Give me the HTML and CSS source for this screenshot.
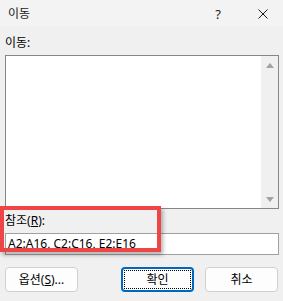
FILE: index.html
```html
<!DOCTYPE html>
<html lang="ko">
<head>
<meta charset="utf-8">
<title>이동</title>
<link rel="stylesheet" href="styles.css">
</head>
<body>
<div class="window">
  <div class="titlebar">
    <span class="title">이동</span>
    <span class="help">?</span>
    <span class="close">
      <svg width="10" height="10" viewBox="0 0 10 10"><path d="M0.5 0.5 L9.5 9.5 M9.5 0.5 L0.5 9.5" stroke="#1a1a1a" stroke-width="1" fill="none"/></svg>
    </span>
  </div>
  <div class="content">
    <div class="label">이동:</div>
    <div class="list">
      <div class="list-body"></div>
      <div class="scrollbar">
        <span class="arrow up"></span>
        <span class="arrow down"></span>
      </div>
    </div>
    <div class="ref">
      <div class="label ref-label">참조(<u>R</u>):</div>
      <div class="input">A2:A16, C2:C16, E2:E16</div>
      <div class="highlight"></div>
    </div>
    <div class="buttons">
      <button class="btn">옵션(<u>S</u>)...</button>
      <span class="spacer"></span>
      <button class="btn default">확인</button>
      <button class="btn cancel">취소</button>
    </div>
  </div>
</div>
</body>
</html>
```
FILE: styles.css
```css
html, body {
  margin: 0;
  padding: 0;
}
body {
  width: 283px;
  height: 301px;
  overflow: hidden;
  background: #f0f0f0;
  font-family: "Noto Sans", "Noto Sans CJK KR", sans-serif;
  font-size: 12px;
  color: #000;
}
.window {
  width: 283px;
  height: 301px;
  background: #f0f0f0;
}
.titlebar {
  height: 27px;
  background: #f3f3f3;
  display: flex;
  align-items: center;
  padding-left: 8px;
}
.title {
  font-size: 12px;
  line-height: 16px;
  color: #1a1a1a;
}
.help {
  margin-left: auto;
  width: 10px;
  text-align: center;
  font-size: 13px;
  line-height: 16px;
  color: #1a1a1a;
}
.close {
  margin-left: 35px;
  margin-right: 15px;
  width: 10px;
  height: 10px;
  display: flex;
}
.content {
  padding: 0 4px 0 5px;
}
.label {
  margin-top: 8px;
  margin-bottom: 4px;
  line-height: 16px;
}
.list {
  height: 154px;
  box-sizing: border-box;
  border: 1px solid #828790;
  background: #fff;
  display: flex;
}
.list-body {
  flex: 1;
}
.scrollbar {
  width: 17px;
  background: #f0f0f0;
  display: flex;
  flex-direction: column;
  align-items: center;
  justify-content: space-between;
  padding: 7px 0 6px;
}
.arrow {
  width: 0;
  height: 0;
  border-left: 4px solid transparent;
  border-right: 4px solid transparent;
}
.arrow.up {
  border-bottom: 5px solid #a3a3a3;
}
.arrow.down {
  border-top: 5px solid #a3a3a3;
}
.ref {
  position: relative;
}
.ref-label {
  margin-top: 4px;
  margin-bottom: 4px;
}
.input {
  height: 22px;
  box-sizing: border-box;
  border: 1px solid #a0a0a0;
  background: #fff;
  padding-left: 2px;
  line-height: 20px;
}
.highlight {
  position: absolute;
  left: -5px;
  top: -7px;
  width: 161px;
  height: 46px;
  box-sizing: border-box;
  border: 4px solid #ee4646;
  box-shadow: 2px 3px 4px rgba(0, 0, 0, 0.3);
  pointer-events: none;
}
.buttons {
  display: flex;
  margin-top: 12px;
  padding-right: 1px;
}
.spacer {
  flex: 1;
}
.btn {
  position: relative;
  width: 73px;
  height: 25px;
  box-sizing: border-box;
  border: 1px solid #d0d0d0;
  border-radius: 4px;
  background: #fdfdfd;
  font-family: inherit;
  font-size: 12px;
  color: #000;
  padding: 0;
  line-height: 16px;
}
.btn.default {
  border: 2px solid #0067c0;
}
.btn.default::after {
  content: "";
  position: absolute;
  left: 1px;
  top: 1px;
  right: 1px;
  bottom: 1px;
  border: 1px dotted #000;
}
.btn.cancel {
  margin-left: 11px;
}
```
